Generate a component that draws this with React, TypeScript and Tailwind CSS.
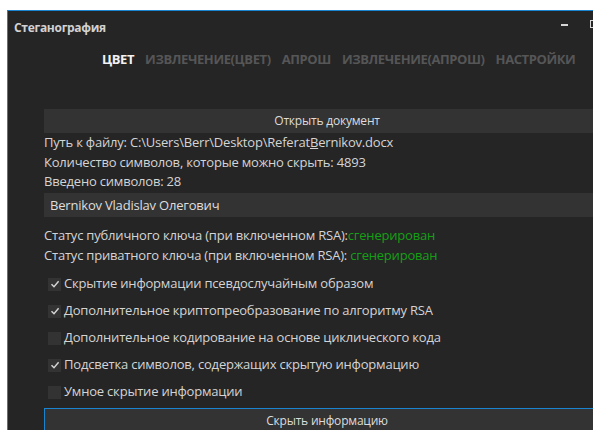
import { useState } from "react";

const tabs = ["ЦВЕТ", "ИЗВЛЕЧЕНИЕ(ЦВЕТ)", "АПРОШ", "ИЗВЛЕЧЕНИЕ(АПРОШ)", "НАСТРОЙКИ"];

const options = [
  { label: "Скрытие информации псевдослучайным образом", checked: true },
  { label: "Дополнительное криптопреобразование по алгоритму RSA", checked: true },
  { label: "Дополнительное кодирование на основе циклического кода", checked: false },
  { label: "Подсветка символов, содержащих скрытую информацию", checked: true },
  { label: "Умное скрытие информации", checked: false },
];

function CheckRow({ label, checked, onToggle }: { label: string; checked: boolean; onToggle: () => void }) {
  return (
    <button onClick={onToggle} className="flex items-center h-[27px] pl-[4px] text-left">
      <span className="w-[13px] h-[13px] bg-[#333334] flex items-center justify-center mr-[3px]">
        {checked && (
          <svg width="10" height="10" viewBox="0 0 10 10">
            <path d="M1.5 5.2 L4 7.8 L8.6 2.2" stroke="#d6d6d6" strokeWidth="1.4" fill="none" />
          </svg>
        )}
      </span>
      <span>{label}</span>
    </button>
  );
}

export default function App() {
  const [active, setActive] = useState(0);
  const [checks, setChecks] = useState(options.map((o) => o.checked));
  const [text, setText] = useState("Bernikov Vladislav Олегович");

  return (
    <div className="w-[593px] h-[430px] overflow-hidden bg-white pl-[7px] pt-[10px]" style={{ fontFamily: '"Open Sans", "Noto Sans", sans-serif' }}>
      <div className="w-[640px] h-[520px] border border-[#1b84d0] bg-[#252526] flex flex-col">
        {/* title bar */}
        <div className="h-[34px] flex items-center pl-[6px] pr-[10px] relative">
          <span className="text-[12px] font-bold text-[#d2d2d2] tracking-[-0.3px]">Стеганография</span>
          <span className="absolute left-[553px] top-[13px] w-[7px] h-[2px] bg-[#d6d6d6]" />
          <span className="absolute left-[582px] top-[9px] w-[9px] h-[8px] border border-[#d6d6d6]" />
        </div>

        {/* tabs */}
        <div className="h-[30px] flex items-center pl-[94px] gap-[11px]">
          {tabs.map((t, i) => (
            <button
              key={t}
              onClick={() => setActive(i)}
              className={`text-[13px] font-bold tracking-[-0.4px] ${i === active ? "text-[#f2f2f2]" : "text-[#565656]"}`}
            >
              {t}
            </button>
          ))}
        </div>

        <div className="flex flex-col px-[36px] pt-[34px] text-[13px] text-[#d4d4d4] tracking-[-0.2px]">
          <button className="h-[24px] bg-[#333334] text-[12px] text-[#dcdcdc]">Открыть документ</button>
          <div className="leading-[19.5px]">
            <div>
              Путь к файлу: C:\Users\Berr\Desktop\Referat<span className="underline">B</span>ernikov.docx
            </div>
            <div>Количество символов, которые можно скрыть: 4893</div>
            <div>Введено символов: {text.length + 1}</div>
          </div>
          <input
            value={text}
            onChange={(e) => setText(e.target.value)}
            className="h-[24px] mt-[1px] bg-[#333334] px-[6px] outline-none text-[#dedede]"
          />
          <div className="pt-[8px] leading-[20px]">
            <div>
              Статус публичного ключа (при включенном RSA):<span className="text-[#14a014]">сгенерирован</span>
            </div>
            <div>
              Статус приватного ключа (при включенном RSA): <span className="text-[#14a014]">сгенерирован</span>
            </div>
          </div>
          <div className="flex flex-col pt-[6px]">
            {options.map((o, i) => (
              <CheckRow
                key={o.label}
                label={o.label}
                checked={checks[i]}
                onToggle={() => setChecks(checks.map((c, j) => (j === i ? !c : c)))}
              />
            ))}
          </div>
          <button className="mt-[2px] h-[26px] bg-[#333334] border border-[#1b84d0] text-[12px] text-[#dcdcdc]">
            Скрыть информацию
          </button>
        </div>
      </div>
    </div>
  );
}
